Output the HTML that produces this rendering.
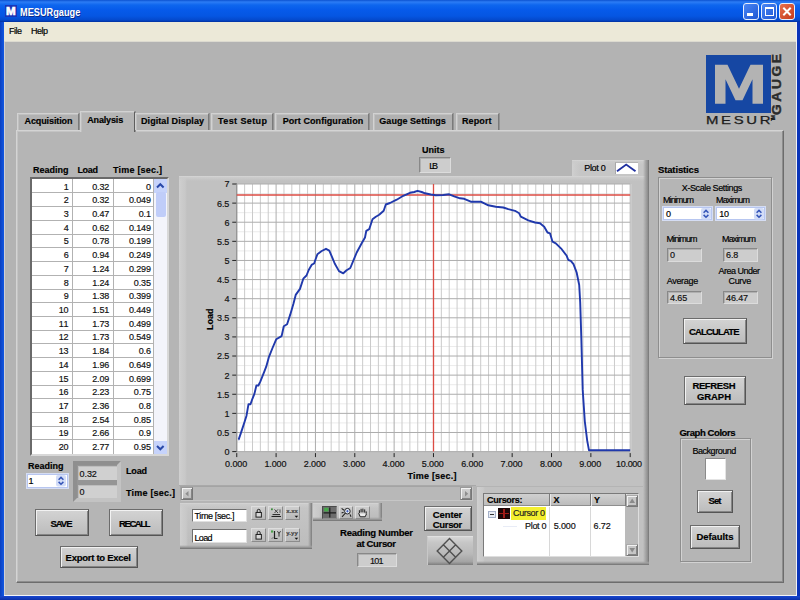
<!DOCTYPE html>
<html><head><meta charset="utf-8"><title>MESURgauge</title>
<style>
html,body{margin:0;padding:0}
body{width:800px;height:600px;overflow:hidden;position:relative;background:#b3b3b3;font-family:"Liberation Sans",sans-serif;font-size:9px;color:#000}
div,span,svg{position:absolute;box-sizing:border-box}
.t{white-space:pre;line-height:14px;height:14px;-webkit-text-stroke:.18px currentColor}
.btn{background:linear-gradient(#d3d3d3,#bcbcbc);border:1px solid #555;border-top-color:#6c6c6c;border-left-color:#6c6c6c;box-shadow:inset 1px 1px 0 #f2f2f2,inset -1px -1px 0 #858585}
.ind{background:#cdcdcd;border:1px solid;border-color:#888 #dcdcdc #dcdcdc #888;box-shadow:inset 1px 1px 0 #b0b0b0}
.raised{background:#c3c3c3;border:1px solid;border-color:#e6e6e6 #6a6a6a #6a6a6a #e6e6e6;box-shadow:inset 1px 1px 0 #d6d6d6,inset -1px -1px 0 #999}
.etch{border:1px solid #8e8e8e;box-shadow:1px 1px 0 #d2d2d2,inset 1px 1px 0 #d2d2d2}
.tab{background:#b1b1b1;border:1px solid;border-color:#d2d2d2 #7a7a7a transparent #d2d2d2;border-bottom:0;box-shadow:1px 0 0 #939393,inset 1px 1px 0 #c0c0c0}
.spin{background:#fff;border:1px solid #b7c6f0;box-shadow:0 0 0 1px #d5ddf3}
.wht{background:#fff;border:1px solid;border-color:#6f6f6f #e0e0e0 #e0e0e0 #6f6f6f}
</style></head><body>
<div style="left:0;top:0;width:800px;height:22px;background:linear-gradient(#0c52d0 0,#2c7cf5 2px,#0e66ee 5px,#065aea 10px,#0556e2 16px,#0449cc 20px,#02309e 22px)"></div><div style="left:0;top:22px;width:4px;height:578px;background:linear-gradient(90deg,#0a3fc0,#1258e2)"></div><div style="left:797px;top:22px;width:3px;height:578px;background:#0a34b8"></div><div style="left:0;top:596px;width:800px;height:4px;background:linear-gradient(#1848d0,#0a2fa8)"></div><div style="left:4px;top:594.5px;width:793px;height:1.5px;background:#f4f4f8"></div><div style="left:795.5px;top:22px;width:1.5px;height:574px;background:#f0f0f6"></div><div style="left:4px;top:41px;width:1px;height:554px;background:#cfcfd4"></div><div style="left:4px;top:22px;width:792px;height:19px;background:#ece9d8"></div><div style="left:4px;top:41px;width:792px;height:1px;background:#dcdad0"></div><div style="left:5px;top:4.5px;width:12px;height:12px;background:#1a35b8"></div><div style="left:743px;top:2.5px;width:16px;height:17px;border:1px solid #e8eefc;border-radius:3px;background:linear-gradient(135deg,#4a86f4,#1e56d4)"></div><div style="left:761px;top:2.5px;width:16px;height:17px;border:1px solid #e8eefc;border-radius:3px;background:linear-gradient(135deg,#4a86f4,#1e56d4)"></div><div style="left:779px;top:2.5px;width:16px;height:17px;border:1px solid #e8eefc;border-radius:3px;background:linear-gradient(135deg,#e8704c,#c43a1c)"></div><div style="left:747px;top:13px;width:6px;height:2.5px;background:#fff"></div><div style="left:765px;top:6.5px;width:9px;height:9px;border:1.5px solid #fff;border-top-width:2.5px"></div><svg style="left:779px;top:2.5px" width="16" height="17" viewBox="0 0 16 17"><path d="M4.3 4.8L11.7 12.2M11.7 4.8L4.3 12.2" stroke="#fff" stroke-width="2"/></svg><div style="left:706px;top:54.5px;width:65px;height:58.5px;background:#1647a3"></div><svg style="left:706px;top:54.5px" width="65" height="59" viewBox="0 0 65 58.5"><path d="M9 9.5H21.5L33 33.5L44.5 9.5H57V48.5H46.5V24L36.5 45H29.5L19.5 24V48.5H9Z" fill="#b3b3b3"/></svg><div style="left:16px;top:130px;width:768px;height:453px;background:#b5b5b5;border:1px solid;border-color:#d4d4d4 #6c6c6c #6c6c6c #d4d4d4;box-shadow:inset -1px -1px 0 #8d8d8d,inset 1px 1px 0 #c4c4c4"></div><div class="tab" style="left:17px;top:113px;width:62px;height:17px"></div><div class="tab" style="left:80px;top:110.5px;width:54.5px;height:21.5px;background:#b5b5b5;border-right-color:#5e5e5e"></div><div class="tab" style="left:135px;top:113px;width:74px;height:17px"></div><div class="tab" style="left:211px;top:113px;width:61.5px;height:17px"></div><div class="tab" style="left:275px;top:113px;width:94px;height:17px"></div><div class="tab" style="left:373px;top:113px;width:79.5px;height:17px"></div><div class="tab" style="left:456px;top:113px;width:43px;height:17px"></div><div style="left:29.5px;top:177px;width:139px;height:279px;background:#fff;border:2px solid;border-color:#6a6a6a #d8d8d8 #d8d8d8 #6a6a6a"></div><div style="left:31.5px;top:192.4px;width:122px;height:1px;background:#b2b2b2"></div><div style="left:31.5px;top:206.1px;width:122px;height:1px;background:#b2b2b2"></div><div style="left:31.5px;top:219.9px;width:122px;height:1px;background:#b2b2b2"></div><div style="left:31.5px;top:233.6px;width:122px;height:1px;background:#b2b2b2"></div><div style="left:31.5px;top:247.3px;width:122px;height:1px;background:#b2b2b2"></div><div style="left:31.5px;top:261.0px;width:122px;height:1px;background:#b2b2b2"></div><div style="left:31.5px;top:274.7px;width:122px;height:1px;background:#b2b2b2"></div><div style="left:31.5px;top:288.5px;width:122px;height:1px;background:#b2b2b2"></div><div style="left:31.5px;top:302.2px;width:122px;height:1px;background:#b2b2b2"></div><div style="left:31.5px;top:315.9px;width:122px;height:1px;background:#b2b2b2"></div><div style="left:31.5px;top:329.6px;width:122px;height:1px;background:#b2b2b2"></div><div style="left:31.5px;top:343.3px;width:122px;height:1px;background:#b2b2b2"></div><div style="left:31.5px;top:357.1px;width:122px;height:1px;background:#b2b2b2"></div><div style="left:31.5px;top:370.8px;width:122px;height:1px;background:#b2b2b2"></div><div style="left:31.5px;top:384.5px;width:122px;height:1px;background:#b2b2b2"></div><div style="left:31.5px;top:398.2px;width:122px;height:1px;background:#b2b2b2"></div><div style="left:31.5px;top:411.9px;width:122px;height:1px;background:#b2b2b2"></div><div style="left:31.5px;top:425.7px;width:122px;height:1px;background:#b2b2b2"></div><div style="left:31.5px;top:439.4px;width:122px;height:1px;background:#b2b2b2"></div><div style="left:72px;top:179px;width:1px;height:275px;background:#b2b2b2"></div><div style="left:113px;top:179px;width:1px;height:275px;background:#b2b2b2"></div><div style="left:153px;top:179px;width:1px;height:275px;background:#b2b2b2"></div><div style="left:154px;top:179px;width:12.5px;height:275px;background:#f3f4fb"></div><div style="left:154px;top:179px;width:12.5px;height:13.5px;background:#c6d3fb"></div><div style="left:155.5px;top:192px;width:10px;height:25px;background:#c0cdf9;border-radius:2px"></div><div style="left:154px;top:440.5px;width:12.5px;height:13.5px;background:#c6d3fb"></div><svg style="left:154px;top:179px" width="13" height="14"><path d="M3 8.5L6.3 5.2L9.6 8.5" fill="none" stroke="#2848a8" stroke-width="2"/></svg><svg style="left:154px;top:440.5px" width="13" height="14"><path d="M3 5L6.3 8.3L9.6 5" fill="none" stroke="#2848a8" stroke-width="2"/></svg><div class="spin" style="left:27px;top:474px;width:40.5px;height:13.5px"></div><svg style="left:55.8px;top:475px" width="10" height="12"><rect width="10" height="11.5" rx="2" fill="#d3ddf7"/><path d="M2.6 4.8L5 2.4L7.4 4.8M2.6 6.9L5 9.3L7.4 6.9" fill="none" stroke="#3555b8" stroke-width="1.5"/></svg><div style="left:72.7px;top:461px;width:48.5px;height:41.3px;background:#959595;border:4px solid;border-color:#8f8f8f #c3c3c3 #c3c3c3 #8f8f8f"></div><div style="left:77.7px;top:466.4px;width:39.6px;height:13.8px;background:#d0d0d0;border-top:1px solid #bdbdbd;border-left:1px solid #bdbdbd"></div><div style="left:77.7px;top:484.8px;width:39.6px;height:13.2px;background:#d0d0d0;border-top:1px solid #bdbdbd;border-left:1px solid #bdbdbd"></div><div class="btn" style="left:35px;top:509px;width:54px;height:26.5px"></div><div class="btn" style="left:109px;top:509px;width:54px;height:26.5px"></div><div class="btn" style="left:60px;top:545.5px;width:77.5px;height:22.5px"></div><div class="ind" style="left:418.5px;top:157px;width:32px;height:15.5px"></div><div style="left:572px;top:159.5px;width:76.5px;height:16.5px;background:#c6c6c6"></div><div style="left:572px;top:159.5px;width:8px;height:16.5px;background:linear-gradient(90deg,#d0d0d0,#cbcbcb 3px,#c8c8c8 6px,rgba(200,200,200,0))"></div><div style="left:572px;top:159.5px;width:76.5px;height:5px;background:linear-gradient(#d6d6d6,#cbcbcb 1.5px,rgba(200,200,200,0))"></div><div style="left:642.5px;top:159.5px;width:6px;height:16.5px;background:linear-gradient(90deg,rgba(160,160,160,0),#a4a4a4 45%,#8a8a8a 85%,#6e6e6e)"></div><div style="left:614.5px;top:161.5px;width:23px;height:12.5px;background:#fff;border-left:1px solid #a8a8a8;border-top:1px solid #b4b4b4"></div><svg style="left:614.5px;top:161.5px" width="23" height="13"><path d="M2 9.3L11.2 2.6L20.5 9.3" fill="none" stroke="#2030a0" stroke-width="1.9"/></svg><div style="left:179px;top:176px;width:469.5px;height:309.5px;background:#c1c1c1"></div><div style="left:179px;top:176px;width:8px;height:309.5px;background:linear-gradient(90deg,#d0d0d0,#cbcbcb 3px,#c8c8c8 6px,rgba(200,200,200,0))"></div><div style="left:179px;top:176px;width:469.5px;height:5px;background:linear-gradient(#d6d6d6,#cbcbcb 1.5px,rgba(200,200,200,0))"></div><div style="left:642.5px;top:176px;width:6px;height:309.5px;background:linear-gradient(90deg,rgba(160,160,160,0),#a4a4a4 45%,#8a8a8a 85%,#6e6e6e)"></div><div style="left:179px;top:484.5px;width:297px;height:1.5px;background:#a9a9a9"></div><svg style="left:0;top:0" width="800" height="600" viewBox="0 0 800 600"><rect x="236.75" y="184.0" width="394.4" height="267.6" fill="#fff"/><path d="M236.75 193.56H630.2M236.75 212.67H630.2M236.75 231.79H630.2M236.75 250.90H630.2M236.75 270.01H630.2M236.75 289.13H630.2M236.75 308.24H630.2M236.75 327.36H630.2M236.75 346.47H630.2M236.75 365.59H630.2M236.75 384.70H630.2M236.75 403.81H630.2M236.75 422.93H630.2M236.75 442.04H630.2" stroke="#ebebeb" stroke-width="1" fill="none"/><path d="M244.62 184.0V451.6M252.49 184.0V451.6M260.36 184.0V451.6M268.23 184.0V451.6M283.96 184.0V451.6M291.83 184.0V451.6M299.70 184.0V451.6M307.57 184.0V451.6M323.31 184.0V451.6M331.18 184.0V451.6M339.05 184.0V451.6M346.92 184.0V451.6M362.65 184.0V451.6M370.52 184.0V451.6M378.39 184.0V451.6M386.26 184.0V451.6M402.00 184.0V451.6M409.87 184.0V451.6M417.74 184.0V451.6M425.61 184.0V451.6M441.34 184.0V451.6M449.21 184.0V451.6M457.08 184.0V451.6M464.95 184.0V451.6M480.69 184.0V451.6M488.56 184.0V451.6M496.43 184.0V451.6M504.30 184.0V451.6M520.03 184.0V451.6M527.90 184.0V451.6M535.77 184.0V451.6M543.64 184.0V451.6M559.38 184.0V451.6M567.25 184.0V451.6M575.12 184.0V451.6M582.99 184.0V451.6M598.72 184.0V451.6M606.59 184.0V451.6M614.46 184.0V451.6M622.33 184.0V451.6" stroke="#cbcbcb" stroke-width="1" fill="none"/><path d="M236.75 184.0V451.6M276.10 184.0V451.6M315.44 184.0V451.6M354.79 184.0V451.6M394.13 184.0V451.6M433.48 184.0V451.6M472.82 184.0V451.6M512.16 184.0V451.6M551.51 184.0V451.6M590.86 184.0V451.6M630.20 184.0V451.6M236.75 184.00H630.2M236.75 203.11H630.2M236.75 222.23H630.2M236.75 241.34H630.2M236.75 260.46H630.2M236.75 279.57H630.2M236.75 298.69H630.2M236.75 317.80H630.2M236.75 336.91H630.2M236.75 356.03H630.2M236.75 375.14H630.2M236.75 394.26H630.2M236.75 413.37H630.2M236.75 432.49H630.2M236.75 451.60H630.2" stroke="#adadad" stroke-width="1" fill="none"/><path d="M236.75 453.1v4M276.10 453.1v4M315.44 453.1v4M354.79 453.1v4M394.13 453.1v4M433.48 453.1v4M472.82 453.1v4M512.16 453.1v4M551.51 453.1v4M590.86 453.1v4M630.20 453.1v4M232.25 184.00h4.5M232.25 203.11h4.5M232.25 222.23h4.5M232.25 241.34h4.5M232.25 260.46h4.5M232.25 279.57h4.5M232.25 298.69h4.5M232.25 317.80h4.5M232.25 336.91h4.5M232.25 356.03h4.5M232.25 375.14h4.5M232.25 394.26h4.5M232.25 413.37h4.5M232.25 432.49h4.5M232.25 451.60h4.5" stroke="#222" stroke-width="1" fill="none"/><path d="M236.75 184.0V451.6" stroke="#8c8c8c" stroke-width="1"/><path d="M236.75 195H630.2M433.5 184.0V451.6" stroke="#dc4c44" stroke-width="1.3" fill="none"/><polyline points="238.3,439.4 238.7,439.4 240.7,433.6 242.6,427.9 244.6,421.8 246.5,415.7 248.5,404.2 250.5,404.2 252.4,398.8 254.4,393.9 256.4,385.5 258.4,385.5 260.4,381.3 262.3,376.7 264.3,371.7 266.3,366.4 268.7,357.7 272.5,348.0 276.2,339.3 281.6,336.1 283.8,326.3 287.1,324.2 290.3,314.4 293.5,303.6 295.7,294.9 300.0,288.9 303.3,278.7 306.5,275.5 308.7,270.0 311.9,264.6 314.1,263.5 317.4,254.2 321.7,251.0 326.0,248.8 329.3,250.6 332.5,258.1 334.7,263.5 339.0,271.1 343.3,273.3 346.6,270.3 350.3,268.0 356.7,252.5 361.7,243.3 365.0,237.5 366.3,230.8 369.2,229.2 372.5,219.2 375.8,216.7 379.2,214.7 383.7,210.8 385.8,204.5 390.0,203.0 396.7,199.7 403.3,195.8 410.0,192.8 414.2,192.0 417.5,190.8 421.7,192.0 425.0,193.3 430.8,194.5 435.8,195.3 443.3,195.0 449.2,194.3 454.2,196.3 460.0,198.3 464.2,198.8 470.8,201.7 480.8,201.7 488.3,205.3 495.8,206.7 503.3,207.5 508.3,209.2 515.0,210.8 519.2,213.3 520.8,216.7 528.3,220.3 535.0,222.5 540.0,223.3 544.2,226.7 547.5,232.5 550.0,233.3 552.5,241.7 555.8,243.3 561.7,249.2 566.7,255.8 568.3,260.0 570.8,260.8 573.5,264.2 576.7,272.7 579.2,285.0 580.2,302.4 581.3,337.4 582.7,389.9 584.8,421.3 587.2,440.6 589.0,450.3 630.2,450.3" fill="none" stroke="#2039ac" stroke-width="1.9" stroke-linejoin="round"/></svg><div style="left:180px;top:486px;width:293px;height:14.5px;background:#b8b8b8;border:1px solid;border-color:#a4a4a4 #c6c6c6 #c6c6c6 #a4a4a4"></div><div class="btn" style="left:181px;top:487px;width:12px;height:13px;border-color:#9a9a9a #777 #777 #9a9a9a"></div><svg style="left:181px;top:487px" width="12" height="13"><path d="M7.5 4L4.3 6.8L7.5 9.6Z" fill="#8e8e8e"/></svg><div class="btn" style="left:460px;top:487px;width:12px;height:13px;border-color:#9a9a9a #777 #777 #9a9a9a"></div><svg style="left:460px;top:487px" width="12" height="13"><path d="M5 4L8.2 6.8L5 9.6Z" fill="#8e8e8e"/></svg><div style="left:180px;top:502.5px;width:131.5px;height:46.0px;background:linear-gradient(#c6c6c6,#bcbcbc)"></div><div style="left:180px;top:502.5px;width:8px;height:46.0px;background:linear-gradient(90deg,#d0d0d0,#cbcbcb 3px,#c8c8c8 6px,rgba(200,200,200,0))"></div><div style="left:180px;top:502.5px;width:131.5px;height:5px;background:linear-gradient(#d6d6d6,#cbcbcb 1.5px,rgba(200,200,200,0))"></div><div style="left:307.5px;top:502.5px;width:4px;height:46.0px;background:linear-gradient(90deg,rgba(160,160,160,0),#a4a4a4 45%,#8a8a8a 85%,#6e6e6e)"></div><div style="left:180px;top:544.5px;width:131.5px;height:4px;background:linear-gradient(rgba(160,160,160,0),#a0a0a0 50%,#707070)"></div><div class="wht" style="left:192px;top:508.5px;width:54.5px;height:13px"></div><div class="wht" style="left:192px;top:529px;width:54.5px;height:14px"></div><div style="left:251px;top:506px;width:15px;height:13.5px;background:linear-gradient(#cecece,#b8b8b8);border:1px solid;border-color:#dedede #8c8c8c #8c8c8c #dedede"></div><div style="left:267.5px;top:506px;width:15.5px;height:13.5px;background:linear-gradient(#cecece,#b8b8b8);border:1px solid;border-color:#dedede #8c8c8c #8c8c8c #dedede"></div><div style="left:284.5px;top:506px;width:15.5px;height:13.5px;background:linear-gradient(#cecece,#b8b8b8);border:1px solid;border-color:#dedede #8c8c8c #8c8c8c #dedede"></div><div style="left:251px;top:528px;width:15px;height:13.5px;background:linear-gradient(#cecece,#b8b8b8);border:1px solid;border-color:#dedede #8c8c8c #8c8c8c #dedede"></div><div style="left:267.5px;top:528px;width:15.5px;height:13.5px;background:linear-gradient(#cecece,#b8b8b8);border:1px solid;border-color:#dedede #8c8c8c #8c8c8c #dedede"></div><div style="left:284.5px;top:528px;width:15.5px;height:13.5px;background:linear-gradient(#cecece,#b8b8b8);border:1px solid;border-color:#dedede #8c8c8c #8c8c8c #dedede"></div><svg style="left:251px;top:506px" width="15" height="14"><rect x="5" y="6.5" width="5.4" height="4.6" fill="#d8d8d8" stroke="#222" stroke-width="1"/><path d="M6.2 6.5V4.8a1.5 1.5 0 0 1 3 0V6.5" fill="none" stroke="#222" stroke-width="1"/></svg><svg style="left:251px;top:528px" width="15" height="14"><rect x="5" y="6.5" width="5.4" height="4.6" fill="#d8d8d8" stroke="#222" stroke-width="1"/><path d="M6.2 6.5V4.8a1.5 1.5 0 0 1 3 0V6.5" fill="none" stroke="#222" stroke-width="1"/></svg><svg style="left:267.5px;top:506px" width="16" height="14"><path d="M3.5 10.5H13M4.5 8.6H12" stroke="#222" stroke-width="1"/><path d="M6.5 3.4L10 7M10 3.4L6.5 7" stroke="#444" stroke-width="1"/><path d="M12 3.4v3.4" stroke="#555"/><rect x="3" y="2.4" width="1.8" height="1.8" fill="#3a8a3a"/></svg><svg style="left:267.5px;top:528px" width="16" height="14"><path d="M6.5 3V10.5H9.5" stroke="#222" stroke-width="1.2" fill="none"/><path d="M9.5 3.2L11 5.6L12.5 3.2M11 5.6V8.6" stroke="#333" stroke-width="1" fill="none"/><rect x="3" y="2.4" width="2.2" height="2.2" fill="#4aa04a"/><path d="M3.5 11L5.5 9" stroke="#777"/></svg><svg style="left:284.5px;top:506px" width="16" height="14"><path d="M9.6 9.8h3.6l-1.8 2z" fill="#111"/></svg><svg style="left:284.5px;top:528px" width="16" height="14"><path d="M9.6 9.8h3.6l-1.8 2z" fill="#111"/></svg><div style="left:312.5px;top:502.5px;width:69.0px;height:18.5px;background:linear-gradient(#c8c8c8,#bababa)"></div><div style="left:312.5px;top:502.5px;width:8px;height:18.5px;background:linear-gradient(90deg,#d0d0d0,#cbcbcb 3px,#c8c8c8 6px,rgba(200,200,200,0))"></div><div style="left:312.5px;top:502.5px;width:69.0px;height:5px;background:linear-gradient(#d6d6d6,#cbcbcb 1.5px,rgba(200,200,200,0))"></div><div style="left:377.5px;top:502.5px;width:4px;height:18.5px;background:linear-gradient(90deg,rgba(160,160,160,0),#a4a4a4 45%,#8a8a8a 85%,#6e6e6e)"></div><div style="left:312.5px;top:517px;width:69.0px;height:4px;background:linear-gradient(rgba(160,160,160,0),#a0a0a0 50%,#707070)"></div><div style="left:321.5px;top:506px;width:15.5px;height:13px;background:#6c6c6c;border:1px solid;border-color:#4a4a4a #8c8c8c #8c8c8c #4a4a4a"></div><svg style="left:321.5px;top:506px" width="16" height="13"><path d="M7.8 1.5V11.5M1.5 6.8H14" stroke="#1c1c1c" stroke-width="1.2"/><rect x="2.2" y="1.8" width="4.2" height="3.6" fill="#44aa48"/></svg><div style="left:339px;top:506px;width:14px;height:13px;background:linear-gradient(#cecece,#b8b8b8);border:1px solid;border-color:#dedede #8c8c8c #8c8c8c #dedede"></div><svg style="left:339px;top:506px" width="14" height="13"><circle cx="8.4" cy="5.2" r="2.8" fill="#e8eef8" stroke="#222" stroke-width="1"/><path d="M6.4 7.2L3 10.8M2.6 2.4L5 4.2M2.6 7L4.6 6.2M11 8.4L12 10.8" stroke="#222" stroke-width="1.1"/><path d="M7.2 5.2h2.4M8.4 4v2.4" stroke="#2848b0" stroke-width=".8"/></svg><div style="left:355px;top:506px;width:14.5px;height:13px;background:linear-gradient(#cecece,#b8b8b8);border:1px solid;border-color:#dedede #8c8c8c #8c8c8c #dedede"></div><svg style="left:355px;top:506px" width="15" height="13"><path d="M4.6 7.4H11V10.4H5.4Z" fill="#ececec"/><path d="M4.4 7V4.2M6.1 6.3V2.8M7.9 6.3V2.6M9.7 6.6V3.4M11.2 7.8V5.4M3.6 7.2L5.2 10.8H10.2L11.4 8" fill="none" stroke="#222" stroke-width="1"/></svg><div class="ind" style="left:357px;top:553px;width:40px;height:13.5px"></div><div class="btn" style="left:424.3px;top:506.3px;width:47.6px;height:25px"></div><div style="left:426.5px;top:535.5px;width:46.3px;height:29px;background:linear-gradient(#d6d6d6,#c6c6c6 20%,#b9b9b9 60%,#a4a4a4 88%,#7e7e7e);border-left:1px solid #c8c8c8;border-top:1px solid #e0e0e0"></div><svg style="left:426.5px;top:535.5px" width="46" height="29"><path d="M22.5 2.4L34.8 14.9L22.5 27.4L10.2 14.9ZM16.35 8.65L28.65 21.15M28.65 8.65L16.35 21.15" fill="none" stroke="#505050" stroke-width="1.4"/></svg><div style="left:476.5px;top:485.5px;width:172.0px;height:79.5px;background:#c1c1c1"></div><div style="left:476.5px;top:485.5px;width:8px;height:79.5px;background:linear-gradient(90deg,#d0d0d0,#cbcbcb 3px,#c8c8c8 6px,rgba(200,200,200,0))"></div><div style="left:642.5px;top:485.5px;width:6px;height:79.5px;background:linear-gradient(90deg,rgba(160,160,160,0),#a4a4a4 45%,#8a8a8a 85%,#6e6e6e)"></div><div style="left:476.5px;top:561px;width:172.0px;height:4px;background:linear-gradient(rgba(160,160,160,0),#a0a0a0 50%,#707070)"></div><div style="left:476.5px;top:485.5px;width:166px;height:1.5px;background:#b4b4b4"></div><div style="left:483px;top:493px;width:155.5px;height:64px;background:#fff;border:1px solid;border-color:#7a7a7a #dedede #dedede #7a7a7a"></div><div style="left:484px;top:494px;width:153.5px;height:12px;background:linear-gradient(#d0d0d0,#bcbcbc);border-bottom:1px solid #8e8e8e"></div><div style="left:549px;top:494px;width:1px;height:12px;background:#7c7c7c;box-shadow:1px 0 0 #e8e8e8"></div><div style="left:589.5px;top:494px;width:1px;height:12px;background:#7c7c7c;box-shadow:1px 0 0 #e8e8e8"></div><div style="left:624.5px;top:494px;width:1px;height:12px;background:#7c7c7c;box-shadow:1px 0 0 #e8e8e8"></div><div style="left:549px;top:506.5px;width:1px;height:49.5px;background:#d8d8d8"></div><div style="left:589.5px;top:506.5px;width:1px;height:49.5px;background:#d8d8d8"></div><div style="left:625px;top:506px;width:12.5px;height:50px;background:#bababa"></div><div class="btn" style="left:625.5px;top:494.5px;width:12px;height:12px;border-color:#aaa #787878 #787878 #aaa;background:#c6c6c6"></div><svg style="left:625.5px;top:494.5px" width="12" height="12"><path d="M6.2 3.6L9 8H3.4Z" fill="#8a8a8a"/></svg><div class="btn" style="left:625.5px;top:544px;width:12px;height:12px;border-color:#aaa #787878 #787878 #aaa;background:#c6c6c6"></div><svg style="left:625.5px;top:544px" width="12" height="12"><path d="M6.2 8.4L9 4H3.4Z" fill="#8a8a8a"/></svg><div style="left:488px;top:510.5px;width:7.5px;height:7px;background:#e8ecf4;border:1px solid #a4b0c8"></div><div style="left:490px;top:513.5px;width:3.5px;height:1px;background:#333"></div><div style="left:498px;top:507.8px;width:12px;height:11.2px;background:#1c0808"></div><div style="left:499px;top:512.8px;width:10px;height:1.3px;background:#a01c18"></div><div style="left:503.4px;top:508.8px;width:1.3px;height:9px;background:#a01c18"></div><div style="left:510.6px;top:507px;width:35.7px;height:12.6px;background:#f4ef30"></div><div style="left:503px;top:525.5px;width:14px;height:1px;background:#e8ecf6"></div><div class="etch" style="left:657.5px;top:177px;width:114.5px;height:180.5px"></div><div class="spin" style="left:663px;top:206.5px;width:49px;height:13.5px"></div><svg style="left:701px;top:207.5px" width="10" height="12"><rect width="10" height="11.5" rx="2" fill="#d3ddf7"/><path d="M2.6 4.8L5 2.4L7.4 4.8M2.6 6.9L5 9.3L7.4 6.9" fill="none" stroke="#3555b8" stroke-width="1.5"/></svg><div class="spin" style="left:716.3px;top:206.5px;width:49px;height:13.5px"></div><svg style="left:754.3px;top:207.5px" width="10" height="12"><rect width="10" height="11.5" rx="2" fill="#d3ddf7"/><path d="M2.6 4.8L5 2.4L7.4 4.8M2.6 6.9L5 9.3L7.4 6.9" fill="none" stroke="#3555b8" stroke-width="1.5"/></svg><div class="ind" style="left:667px;top:247.5px;width:35px;height:14px"></div><div class="ind" style="left:723px;top:247.5px;width:34.5px;height:14px"></div><div class="ind" style="left:667px;top:290.5px;width:35px;height:13.5px"></div><div class="ind" style="left:723px;top:290.5px;width:34.5px;height:13.5px"></div><div class="btn" style="left:682.5px;top:317.5px;width:64.5px;height:26px"></div><div class="btn" style="left:684px;top:375.5px;width:62px;height:29.5px"></div><div class="etch" style="left:680px;top:438px;width:70.5px;height:124px"></div><div style="left:704.5px;top:458px;width:21px;height:21.5px;background:#fff;border:1px solid;border-color:#8a8a8a #e4e4e4 #e4e4e4 #8a8a8a"></div><div class="btn" style="left:696.5px;top:489.5px;width:36px;height:23px"></div><div class="btn" style="left:689.5px;top:525px;width:50.5px;height:24px"></div>
<span class="t" style="left:6.2px;top:5px;font-size:10px;transform-origin:0 0;transform:scaleX(1.16);font-weight:bold;color:#fff;-webkit-text-stroke:.6px #fff;">M</span>
<span class="t" style="left:19.8px;top:5px;font-size:10.5px;transform-origin:0 0;transform:scaleX(0.875);font-weight:bold;color:#fff;text-shadow:1px 1px 0 #0a2a8a;-webkit-text-stroke:0;">MESURgauge</span>
<span class="t" style="left:9.0px;top:24px;font-size:9px;letter-spacing:-0.51px;">File</span>
<span class="t" style="left:31.0px;top:24px;font-size:9px;letter-spacing:-0.51px;">Help</span>
<span class="t" style="left:706.0px;top:113px;font-size:10.5px;transform-origin:0 0;transform:scaleX(1.42);color:#1c1c1c;letter-spacing:1.88px;-webkit-text-stroke:.25px #1c1c1c;">MESUR</span>
<span class="t" style="left:770px;top:115.0px;font-size:12px;transform-origin:0 0;transform:rotate(-90deg) scaleX(1.15);font-weight:bold;color:#2c2c2c;letter-spacing:2.26px;-webkit-text-stroke:.4px #2c2c2c;">GAUGE</span>
<span class="t" style="left:766px;top:120.5px;font-size:5px;transform-origin:0 0;transform:rotate(-90deg) scaleX(1);font-weight:bold;color:#111;letter-spacing:-1.23px;">TM</span>
<span class="t" style="left:24.5px;top:114px;font-size:9px;font-weight:bold;letter-spacing:-0.10px;">Acquisition</span>
<span class="t" style="left:87.2px;top:113px;font-size:9px;font-weight:bold;letter-spacing:-0.15px;">Analysis</span>
<span class="t" style="left:141.0px;top:114px;font-size:9px;font-weight:bold;letter-spacing:0.07px;">Digital Display</span>
<span class="t" style="left:218.0px;top:114px;font-size:9px;font-weight:bold;letter-spacing:0.41px;">Test Setup</span>
<span class="t" style="left:282.7px;top:114px;font-size:9px;font-weight:bold;letter-spacing:0.06px;">Port Configuration</span>
<span class="t" style="left:379.3px;top:114px;font-size:9px;font-weight:bold;letter-spacing:0.04px;">Gauge Settings</span>
<span class="t" style="left:462.0px;top:114px;font-size:9px;font-weight:bold;letter-spacing:0.12px;">Report</span>
<span class="t" style="left:33.0px;top:163px;font-size:9px;font-weight:bold;letter-spacing:-0.02px;">Reading</span>
<span class="t" style="left:77.4px;top:163px;font-size:9px;font-weight:bold;letter-spacing:-0.30px;">Load</span>
<span class="t" style="left:113.0px;top:163px;font-size:9px;font-weight:bold;letter-spacing:0.21px;">Time [sec.]</span>
<span class="t" style="left:63.7px;top:180px;font-size:9px;color:#111;letter-spacing:-0.12px;">1</span>
<span class="t" style="left:92.2px;top:180px;font-size:9px;color:#111;letter-spacing:-0.11px;">0.32</span>
<span class="t" style="left:146.1px;top:180px;font-size:9px;color:#111;letter-spacing:-0.12px;">0</span>
<span class="t" style="left:63.7px;top:193px;font-size:9px;color:#111;letter-spacing:-0.12px;">2</span>
<span class="t" style="left:92.2px;top:193px;font-size:9px;color:#111;letter-spacing:-0.11px;">0.32</span>
<span class="t" style="left:128.9px;top:193px;font-size:9px;color:#111;letter-spacing:-0.11px;">0.049</span>
<span class="t" style="left:63.7px;top:207px;font-size:9px;color:#111;letter-spacing:-0.12px;">3</span>
<span class="t" style="left:92.2px;top:207px;font-size:9px;color:#111;letter-spacing:-0.11px;">0.47</span>
<span class="t" style="left:138.7px;top:207px;font-size:9px;color:#111;letter-spacing:-0.11px;">0.1</span>
<span class="t" style="left:63.7px;top:221px;font-size:9px;color:#111;letter-spacing:-0.12px;">4</span>
<span class="t" style="left:92.2px;top:221px;font-size:9px;color:#111;letter-spacing:-0.11px;">0.62</span>
<span class="t" style="left:128.9px;top:221px;font-size:9px;color:#111;letter-spacing:-0.11px;">0.149</span>
<span class="t" style="left:63.7px;top:234px;font-size:9px;color:#111;letter-spacing:-0.12px;">5</span>
<span class="t" style="left:92.2px;top:234px;font-size:9px;color:#111;letter-spacing:-0.11px;">0.78</span>
<span class="t" style="left:128.9px;top:234px;font-size:9px;color:#111;letter-spacing:-0.11px;">0.199</span>
<span class="t" style="left:63.7px;top:248px;font-size:9px;color:#111;letter-spacing:-0.12px;">6</span>
<span class="t" style="left:92.2px;top:248px;font-size:9px;color:#111;letter-spacing:-0.11px;">0.94</span>
<span class="t" style="left:128.9px;top:248px;font-size:9px;color:#111;letter-spacing:-0.11px;">0.249</span>
<span class="t" style="left:63.7px;top:262px;font-size:9px;color:#111;letter-spacing:-0.12px;">7</span>
<span class="t" style="left:92.2px;top:262px;font-size:9px;color:#111;letter-spacing:-0.11px;">1.24</span>
<span class="t" style="left:128.9px;top:262px;font-size:9px;color:#111;letter-spacing:-0.11px;">0.299</span>
<span class="t" style="left:63.7px;top:276px;font-size:9px;color:#111;letter-spacing:-0.12px;">8</span>
<span class="t" style="left:92.2px;top:276px;font-size:9px;color:#111;letter-spacing:-0.11px;">1.24</span>
<span class="t" style="left:133.8px;top:276px;font-size:9px;color:#111;letter-spacing:-0.11px;">0.35</span>
<span class="t" style="left:63.7px;top:289px;font-size:9px;color:#111;letter-spacing:-0.12px;">9</span>
<span class="t" style="left:92.2px;top:289px;font-size:9px;color:#111;letter-spacing:-0.11px;">1.38</span>
<span class="t" style="left:128.9px;top:289px;font-size:9px;color:#111;letter-spacing:-0.11px;">0.399</span>
<span class="t" style="left:58.8px;top:303px;font-size:9px;color:#111;letter-spacing:-0.22px;">10</span>
<span class="t" style="left:92.2px;top:303px;font-size:9px;color:#111;letter-spacing:-0.11px;">1.51</span>
<span class="t" style="left:128.9px;top:303px;font-size:9px;color:#111;letter-spacing:-0.11px;">0.449</span>
<span class="t" style="left:58.8px;top:317px;font-size:9px;color:#111;letter-spacing:0.46px;">11</span>
<span class="t" style="left:92.2px;top:317px;font-size:9px;color:#111;letter-spacing:-0.11px;">1.73</span>
<span class="t" style="left:128.9px;top:317px;font-size:9px;color:#111;letter-spacing:-0.11px;">0.499</span>
<span class="t" style="left:58.8px;top:330px;font-size:9px;color:#111;letter-spacing:-0.22px;">12</span>
<span class="t" style="left:92.2px;top:330px;font-size:9px;color:#111;letter-spacing:-0.11px;">1.73</span>
<span class="t" style="left:128.9px;top:330px;font-size:9px;color:#111;letter-spacing:-0.11px;">0.549</span>
<span class="t" style="left:58.8px;top:344px;font-size:9px;color:#111;letter-spacing:-0.22px;">13</span>
<span class="t" style="left:92.2px;top:344px;font-size:9px;color:#111;letter-spacing:-0.11px;">1.84</span>
<span class="t" style="left:138.7px;top:344px;font-size:9px;color:#111;letter-spacing:-0.11px;">0.6</span>
<span class="t" style="left:58.8px;top:358px;font-size:9px;color:#111;letter-spacing:-0.22px;">14</span>
<span class="t" style="left:92.2px;top:358px;font-size:9px;color:#111;letter-spacing:-0.11px;">1.96</span>
<span class="t" style="left:128.9px;top:358px;font-size:9px;color:#111;letter-spacing:-0.11px;">0.649</span>
<span class="t" style="left:58.8px;top:372px;font-size:9px;color:#111;letter-spacing:-0.22px;">15</span>
<span class="t" style="left:92.2px;top:372px;font-size:9px;color:#111;letter-spacing:-0.11px;">2.09</span>
<span class="t" style="left:128.9px;top:372px;font-size:9px;color:#111;letter-spacing:-0.11px;">0.699</span>
<span class="t" style="left:58.8px;top:385px;font-size:9px;color:#111;letter-spacing:-0.22px;">16</span>
<span class="t" style="left:92.2px;top:385px;font-size:9px;color:#111;letter-spacing:-0.11px;">2.23</span>
<span class="t" style="left:133.8px;top:385px;font-size:9px;color:#111;letter-spacing:-0.11px;">0.75</span>
<span class="t" style="left:58.8px;top:399px;font-size:9px;color:#111;letter-spacing:-0.22px;">17</span>
<span class="t" style="left:92.2px;top:399px;font-size:9px;color:#111;letter-spacing:-0.11px;">2.36</span>
<span class="t" style="left:138.7px;top:399px;font-size:9px;color:#111;letter-spacing:-0.11px;">0.8</span>
<span class="t" style="left:58.8px;top:413px;font-size:9px;color:#111;letter-spacing:-0.22px;">18</span>
<span class="t" style="left:92.2px;top:413px;font-size:9px;color:#111;letter-spacing:-0.11px;">2.54</span>
<span class="t" style="left:133.8px;top:413px;font-size:9px;color:#111;letter-spacing:-0.11px;">0.85</span>
<span class="t" style="left:58.8px;top:426px;font-size:9px;color:#111;letter-spacing:-0.22px;">19</span>
<span class="t" style="left:92.2px;top:426px;font-size:9px;color:#111;letter-spacing:-0.11px;">2.66</span>
<span class="t" style="left:138.7px;top:426px;font-size:9px;color:#111;letter-spacing:-0.11px;">0.9</span>
<span class="t" style="left:58.8px;top:440px;font-size:9px;color:#111;letter-spacing:-0.22px;">20</span>
<span class="t" style="left:92.2px;top:440px;font-size:9px;color:#111;letter-spacing:-0.11px;">2.77</span>
<span class="t" style="left:133.8px;top:440px;font-size:9px;color:#111;letter-spacing:-0.11px;">0.95</span>
<span class="t" style="left:28.0px;top:459px;font-size:9px;font-weight:bold;letter-spacing:0.01px;">Reading</span>
<span class="t" style="left:28.6px;top:474px;font-size:9px;letter-spacing:-1.02px;">1</span>
<span class="t" style="left:79.6px;top:467px;font-size:9px;color:#111;letter-spacing:-0.11px;">0.32</span>
<span class="t" style="left:79.6px;top:485px;font-size:9px;color:#111;letter-spacing:-0.12px;">0</span>
<span class="t" style="left:126.0px;top:464px;font-size:9px;font-weight:bold;letter-spacing:-0.17px;">Load</span>
<span class="t" style="left:126.0px;top:486px;font-size:9px;font-weight:bold;letter-spacing:0.21px;">Time [sec.]</span>
<span class="t" style="left:50.5px;top:517px;font-size:9.5px;font-weight:bold;letter-spacing:-1.06px;">SAVE</span>
<span class="t" style="left:119.0px;top:517px;font-size:9.5px;font-weight:bold;letter-spacing:-1.41px;">RECALL</span>
<span class="t" style="left:65.6px;top:551px;font-size:9.5px;font-weight:bold;letter-spacing:-0.27px;">Export to Excel</span>
<span class="t" style="left:422.0px;top:143px;font-size:9px;font-weight:bold;letter-spacing:0.00px;">Units</span>
<span class="t" style="left:429.2px;top:159px;font-size:9px;letter-spacing:-2.22px;">LB</span>
<span class="t" style="left:584.2px;top:161px;font-size:9px;letter-spacing:-0.30px;">Plot 0</span>
<span class="t" style="left:224.4px;top:177px;font-size:9px;color:#111;letter-spacing:-0.12px;">7</span>
<span class="t" style="left:217.0px;top:197px;font-size:9px;color:#111;letter-spacing:-0.11px;">6.5</span>
<span class="t" style="left:224.4px;top:216px;font-size:9px;color:#111;letter-spacing:-0.12px;">6</span>
<span class="t" style="left:217.0px;top:235px;font-size:9px;color:#111;letter-spacing:-0.11px;">5.5</span>
<span class="t" style="left:224.4px;top:254px;font-size:9px;color:#111;letter-spacing:-0.12px;">5</span>
<span class="t" style="left:217.0px;top:273px;font-size:9px;color:#111;letter-spacing:-0.11px;">4.5</span>
<span class="t" style="left:224.4px;top:292px;font-size:9px;color:#111;letter-spacing:-0.12px;">4</span>
<span class="t" style="left:217.0px;top:311px;font-size:9px;color:#111;letter-spacing:-0.11px;">3.5</span>
<span class="t" style="left:224.4px;top:330px;font-size:9px;color:#111;letter-spacing:-0.12px;">3</span>
<span class="t" style="left:217.0px;top:349px;font-size:9px;color:#111;letter-spacing:-0.11px;">2.5</span>
<span class="t" style="left:224.4px;top:369px;font-size:9px;color:#111;letter-spacing:-0.12px;">2</span>
<span class="t" style="left:217.0px;top:388px;font-size:9px;color:#111;letter-spacing:-0.11px;">1.5</span>
<span class="t" style="left:224.4px;top:407px;font-size:9px;color:#111;letter-spacing:-0.12px;">1</span>
<span class="t" style="left:217.0px;top:426px;font-size:9px;color:#111;letter-spacing:-0.11px;">0.5</span>
<span class="t" style="left:224.4px;top:445px;font-size:9px;color:#111;letter-spacing:-0.12px;">0</span>
<span class="t" style="left:225.1px;top:457px;font-size:9px;color:#111;letter-spacing:-0.11px;">0.000</span>
<span class="t" style="left:264.4px;top:457px;font-size:9px;color:#111;letter-spacing:-0.11px;">1.000</span>
<span class="t" style="left:303.8px;top:457px;font-size:9px;color:#111;letter-spacing:-0.11px;">2.000</span>
<span class="t" style="left:343.1px;top:457px;font-size:9px;color:#111;letter-spacing:-0.11px;">3.000</span>
<span class="t" style="left:382.5px;top:457px;font-size:9px;color:#111;letter-spacing:-0.11px;">4.000</span>
<span class="t" style="left:421.8px;top:457px;font-size:9px;color:#111;letter-spacing:-0.11px;">5.000</span>
<span class="t" style="left:461.2px;top:457px;font-size:9px;color:#111;letter-spacing:-0.11px;">6.000</span>
<span class="t" style="left:500.5px;top:457px;font-size:9px;color:#111;letter-spacing:-0.11px;">7.000</span>
<span class="t" style="left:539.9px;top:457px;font-size:9px;color:#111;letter-spacing:-0.11px;">8.000</span>
<span class="t" style="left:579.2px;top:457px;font-size:9px;color:#111;letter-spacing:-0.11px;">9.000</span>
<span class="t" style="left:616.1px;top:457px;font-size:9px;color:#111;letter-spacing:-0.31px;">10.000</span>
<span class="t" style="left:407.5px;top:469px;font-size:9px;font-weight:bold;letter-spacing:0.21px;">Time [sec.]</span>
<span class="t" style="left:203px;top:329.5px;font-size:9px;transform-origin:0 0;transform:rotate(-90deg) scaleX(1);font-weight:bold;letter-spacing:0.00px;">Load</span>
<span class="t" style="left:194.5px;top:509px;font-size:9px;letter-spacing:-0.37px;">Time [sec.]</span>
<span class="t" style="left:194.5px;top:531px;font-size:9px;letter-spacing:-0.68px;">Load</span>
<span class="t" style="left:286.3px;top:504px;font-size:6px;font-weight:bold;color:#444;letter-spacing:-0.06px;">x.xx</span>
<span class="t" style="left:286.3px;top:526px;font-size:6px;font-weight:bold;color:#444;letter-spacing:0.09px;">y.yy</span>
<span class="t" style="left:340.0px;top:526px;font-size:9.5px;font-weight:bold;letter-spacing:-0.23px;">Reading Number</span>
<span class="t" style="left:356.5px;top:537px;font-size:9.5px;font-weight:bold;letter-spacing:-0.34px;">at Cursor</span>
<span class="t" style="left:370.0px;top:554px;font-size:9px;color:#111;letter-spacing:-0.77px;">101</span>
<span class="t" style="left:432.8px;top:508px;font-size:9.5px;font-weight:bold;letter-spacing:-0.12px;">Center</span>
<span class="t" style="left:432.8px;top:518px;font-size:9.5px;font-weight:bold;letter-spacing:-0.33px;">Cursor</span>
<span class="t" style="left:487.0px;top:493px;font-size:9px;font-weight:bold;letter-spacing:-0.29px;">Cursors:</span>
<span class="t" style="left:553.5px;top:493px;font-size:9px;font-weight:bold;letter-spacing:-0.52px;">X</span>
<span class="t" style="left:594.0px;top:493px;font-size:9px;font-weight:bold;letter-spacing:-0.52px;">Y</span>
<span class="t" style="left:513.0px;top:506px;font-size:9px;color:#222;letter-spacing:-0.36px;">Cursor 0</span>
<span class="t" style="left:525.0px;top:519px;font-size:9px;color:#111;letter-spacing:-0.30px;">Plot 0</span>
<span class="t" style="left:553.7px;top:519px;font-size:9px;color:#111;letter-spacing:-0.11px;">5.000</span>
<span class="t" style="left:593.5px;top:519px;font-size:9px;color:#111;letter-spacing:-0.11px;">6.72</span>
<span class="t" style="left:658.0px;top:163px;font-size:9.5px;font-weight:bold;letter-spacing:-0.14px;">Statistics</span>
<span class="t" style="left:681.8px;top:181px;font-size:9px;letter-spacing:-0.40px;">X-Scale Settings</span>
<span class="t" style="left:663.0px;top:193px;font-size:9px;letter-spacing:-0.92px;">Minimum</span>
<span class="t" style="left:716.0px;top:193px;font-size:9px;letter-spacing:-0.84px;">Maximum</span>
<span class="t" style="left:666.0px;top:207px;font-size:9px;letter-spacing:-0.12px;">0</span>
<span class="t" style="left:719.3px;top:207px;font-size:9px;letter-spacing:-0.22px;">10</span>
<span class="t" style="left:666.5px;top:232px;font-size:9px;letter-spacing:-0.92px;">Minimum</span>
<span class="t" style="left:722.0px;top:232px;font-size:9px;letter-spacing:-0.84px;">Maximum</span>
<span class="t" style="left:670.0px;top:248px;font-size:9px;color:#111;letter-spacing:-0.12px;">0</span>
<span class="t" style="left:726.0px;top:248px;font-size:9px;color:#111;letter-spacing:-0.11px;">6.8</span>
<span class="t" style="left:666.7px;top:274px;font-size:9px;letter-spacing:-0.31px;">Average</span>
<span class="t" style="left:718.5px;top:264px;font-size:9px;letter-spacing:-0.50px;">Area Under</span>
<span class="t" style="left:728.5px;top:274px;font-size:9px;letter-spacing:-0.33px;">Curve</span>
<span class="t" style="left:670.0px;top:291px;font-size:9px;color:#111;letter-spacing:-0.11px;">4.65</span>
<span class="t" style="left:726.0px;top:291px;font-size:9px;color:#111;letter-spacing:-0.11px;">46.47</span>
<span class="t" style="left:689.0px;top:325px;font-size:9.5px;font-weight:bold;letter-spacing:-0.86px;">CALCULATE</span>
<span class="t" style="left:692.4px;top:379px;font-size:9.5px;font-weight:bold;letter-spacing:-0.37px;">REFRESH</span>
<span class="t" style="left:697.0px;top:390px;font-size:9.5px;font-weight:bold;letter-spacing:-0.08px;">GRAPH</span>
<span class="t" style="left:679.4px;top:426px;font-size:9.5px;font-weight:bold;letter-spacing:-0.41px;">Graph Colors</span>
<span class="t" style="left:692.4px;top:444px;font-size:9px;letter-spacing:-0.45px;">Background</span>
<span class="t" style="left:708.5px;top:494px;font-size:9.5px;font-weight:bold;letter-spacing:-0.90px;">Set</span>
<span class="t" style="left:696.5px;top:530px;font-size:9.5px;font-weight:bold;letter-spacing:-0.07px;">Defaults</span>
</body></html>
